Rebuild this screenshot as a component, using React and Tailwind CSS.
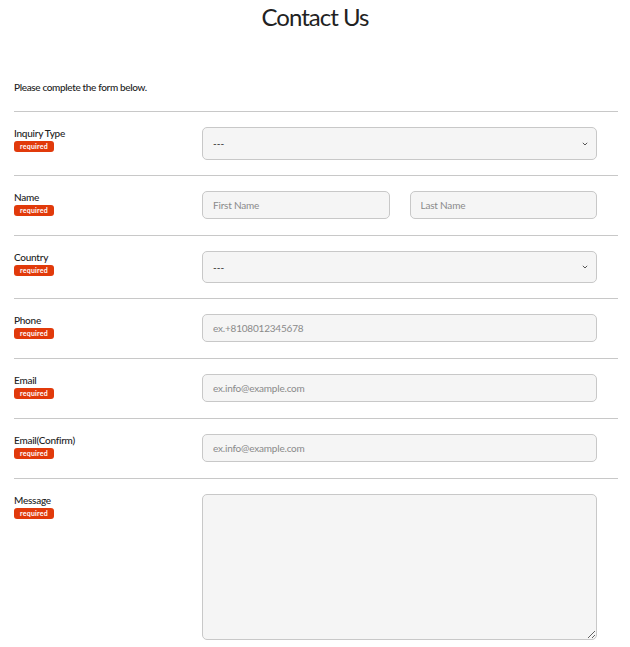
import React from "react";

function Badge() {
  return (
    <span className="mt-[1px] inline-flex h-[11px] w-[40px] items-center justify-center rounded-[3px] bg-[#e13a0b] text-[7px] font-bold leading-none tracking-[0.2px] text-white">
      required
    </span>
  );
}

function Label({ children }) {
  return (
    <div className="-mt-[1px] flex w-[188px] shrink-0 flex-col items-start">
      <span className="text-[10px] leading-[14px] font-medium tracking-[-0.25px] text-[#222]">{children}</span>
      <Badge />
    </div>
  );
}

const inputCls =
  "block h-[28px] w-full rounded-[5px] border border-[#c8c8c8] bg-[#f5f5f5] px-[10px] text-[10px] tracking-[-0.2px] text-[#333] outline-none placeholder:text-[#8a8a8a]";

function Select({ h }) {
  return (
    <div className="relative w-full">
      <select
        className={`block ${h} w-full appearance-none rounded-[5px] border border-[#c8c8c8] bg-[#f5f5f5] px-[10px] text-[10px] text-[#222] outline-none`}
        defaultValue="---"
      >
        <option>---</option>
      </select>
      <svg
        className="pointer-events-none absolute right-[9px] top-1/2 -translate-y-1/2"
        width="6"
        height="4"
        viewBox="0 0 6 4"
      >
        <path d="M0.8 0.8 L3 3 L5.2 0.8" fill="none" stroke="#555" strokeWidth="1" />
      </svg>
    </div>
  );
}

function Row({ label, children, pb = "pb-[16px]" }) {
  return (
    <div className={`flex border-t border-[#c8c8c8] pt-[15px] ${pb}`}>
      <Label>{label}</Label>
      <div className="w-[395px]">{children}</div>
    </div>
  );
}

export default function App() {
  return (
    <div className="w-[630px] bg-white font-['Lato',sans-serif] text-[#222]">
      <h1 className="pt-[2px] text-center text-[24px] leading-[30px] font-normal tracking-[-1px] text-[#222]">
        Contact Us
      </h1>
      <p className="mt-[48px] px-[14px] text-[10px] leading-[14px] font-medium tracking-[-0.35px]">
        Please complete the form below.
      </p>
      <form className="mx-[14px] mt-[17px] w-[604px]">
        <Row label="Inquiry Type" pb="pb-[15px]">
          <Select h="h-[33px]" />
        </Row>
        <Row label="Name">
          <div className="flex gap-[20px]">
            <input className={inputCls} placeholder="First Name" />
            <input className={inputCls} placeholder="Last Name" />
          </div>
        </Row>
        <Row label="Country" pb="pb-[15px]">
          <Select h="h-[32px]" />
        </Row>
        <Row label="Phone">
          <input className={inputCls} placeholder="ex.+8108012345678" />
        </Row>
        <Row label="Email">
          <input className={inputCls} placeholder="ex.info@example.com" />
        </Row>
        <Row label="Email(Confirm)">
          <input className={inputCls} placeholder="ex.info@example.com" />
        </Row>
        <Row label="Message">
          <textarea className="block h-[146px] w-full rounded-[5px] border border-[#c8c8c8] bg-[#f5f5f5] px-[10px] py-[8px] text-[10px] outline-none" />
        </Row>
      </form>
    </div>
  );
}
